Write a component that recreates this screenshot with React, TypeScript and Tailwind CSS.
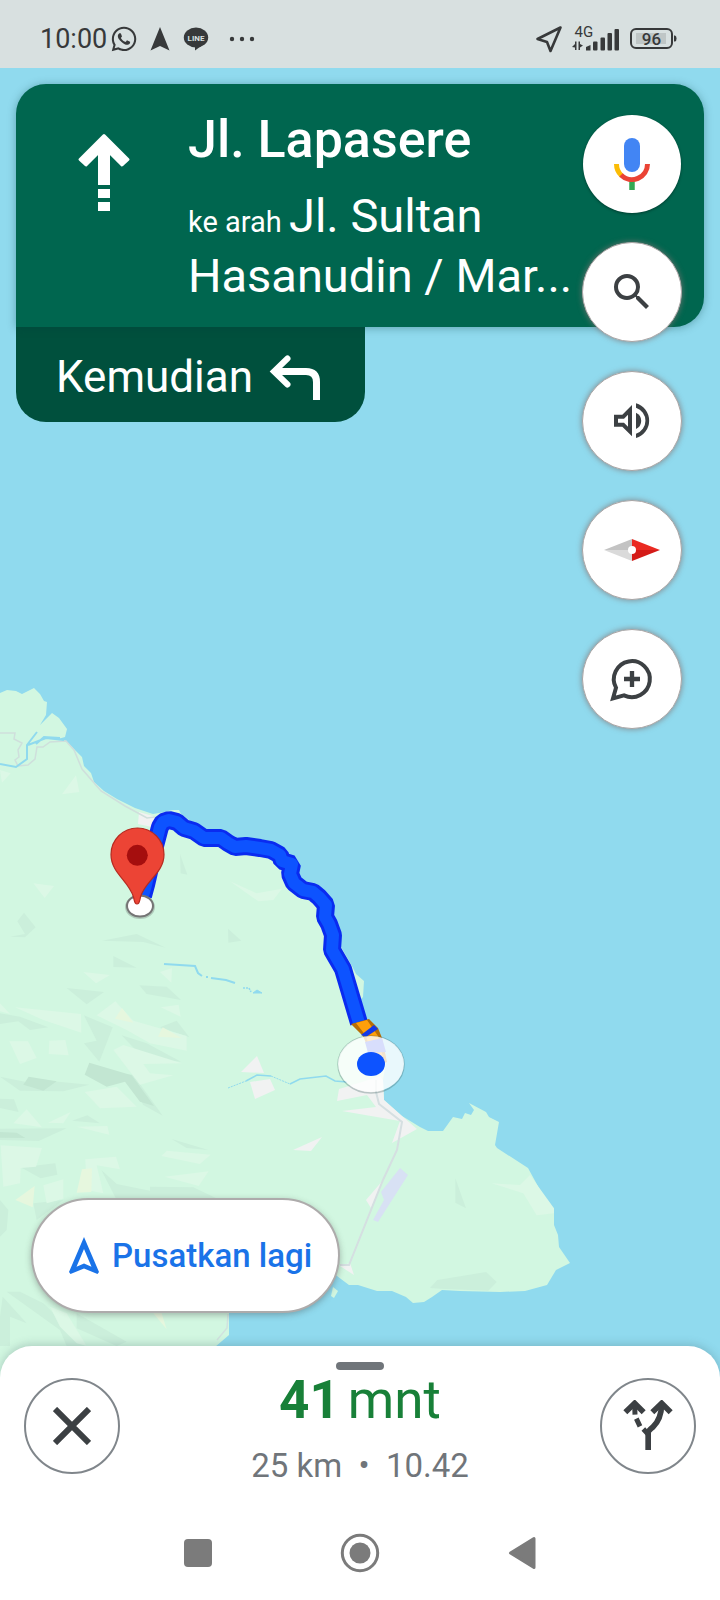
import type { ReactNode } from 'react';
import { MdSearch } from 'react-icons/md';
import { FaWhatsapp } from 'react-icons/fa';

const ROUTE =
  'M143 896 L146 885 L155 846 L160 827 L163 822 L169 820 L177 822 L184 828 L194 831 L204 838 L221 838 L228 843 L235 847 L246 846 L260 848 L271 850 L280 855 L282 861 L292 864 L290 874 L294 883 L303 890 L313 892 L319 897 L326 905 L325 917 L329 924 L333 935 L332 950 L343 969 L359 1023';

const COAST =
  'M0 693 L7 690 L16 691 L22 694 L34 688 L40 694 L44 701 L47 702 L46 715 L40 725 L52 713 L59 718 L67 729 L65 737 L58 739 L66 741 L72 747 L82 757 L84 766 L91 773 L94 782 L104 791 L117 799 L135 808 L153 814 L165 812 L172 810 L179 810 L181 814 L200 828 L222 834 L245 841 L275 846 L292 858 L300 880 L320 895 L332 920 L340 945 L352 966 L356 974 L364 981 L363 997 L361 999 L366 1021 L380 1035 L386 1062 L383 1080 L384 1100 L402 1116 L420 1127 L428 1131 L443 1131 L453 1117 L462 1119 L465 1113 L471 1115 L474 1110 L469 1103 L486 1112 L489 1117 L499 1122 L495 1145 L497 1148 L528 1168 L540 1190 L554 1211 L554 1225 L558 1235 L559 1247 L570 1263 L556 1270 L547 1285 L525 1291 L500 1292 L460 1291 L442 1290 L432 1297 L424 1302 L413 1303 L406 1297 L392 1291 L377 1291 L358 1285 L349 1285 L337 1276 L310 1262 L229 1290 L229 1335 L215 1347 L0 1600 Z';

const DARK_RELIEF = [
  'M306 62 L410 42 L497 83 L430 66 Z',
  'M684 26 L724 62 L685 68 Z',
  'M30 50 L75 42 L52 4 L72 -22 L107 22 L75 52 Z',
  'M340 108 L410 143 L340 141 Z',
  'M200 204 L312 216 L260 253 Z',
  'M418 196 L500 200 L543 240 L440 222 Z',
  'M0 280 L60 290 L145 322 L90 330 L55 304 L0 312 Z',
  'M252 286 L338 322 L298 425 L252 370 L290 362 Z',
  'M480 322 L530 302 L568 352 Z',
  'M365 346 L440 370 L543 425 L430 414 Z',
  'M0 470 L90 488 L160 484 L268 494 L190 514 L60 512 Z',
  'M0 536 L42 538 L56 576 L0 564 Z',
  'M216 602 L262 586 L300 610 Z',
  'M0 626 L200 625 L116 663 L0 660 Z',
  'M380 462 L400 464 L488 587 L430 555 Z',
  'M515 657 L625 690 L560 684 Z',
  'M62 742 L166 730 L172 764 L122 775 Z',
  'M304 750 L350 792 L450 812 L450 800 L580 802 L660 840 L350 840 Z',
  'M0 840 L25 870 L20 930 L0 950 Z',
  'M100 850 L190 840 L110 900 Z',
  'M20 1115 L60 1115 L130 1150 L260 1278 L200 1278 L180 1230 Z',
  'M8 1130 L80 1210 L30 1190 L30 1278 L0 1278 L0 1190 Z',
  'M230 1180 L380 1265 L350 1278 L230 1225 Z',
  'M540 -198 L562 -136 L542 -140 Z',
  'M1366 775 L1398 865 L1366 848 Z',
  'M1290 1104 L1312 1080 L1458 1056 L1490 1086 L1465 1112 L1320 1106 Z',
];

const LIGHT_RELIEF = [
  'M186 -377 L228 -434 L238 -384 Z',
  'M0 -450 L32 -440 L6 -412 Z',
  'M100 -110 L162 -102 L134 -66 Z',
  'M690 -116 L770 -80 L846 -94 L820 -60 L775 -56 Z',
  'M250 156 L330 165 L288 190 Z',
  'M480 156 L516 144 L514 188 Z',
  'M0 250 L30 282 L0 274 Z',
  'M45 262 L243 282 L244 338 L130 300 Z',
  'M290 286 L346 244 L400 302 L560 348 L560 392 L450 370 L380 330 Z',
  'M482 262 L536 254 L542 290 Z',
  'M28 364 L84 364 L110 414 L60 432 Z',
  'M148 362 L196 360 L206 406 L146 402 Z',
  'M340 390 L370 375 L545 430 L430 432 L450 460 L520 466 L420 494 Z',
  'M254 516 L350 500 L410 560 L300 565 Z',
  'M80 568 L126 622 L40 610 Z',
  'M144 608 L212 576 L190 610 Z',
  'M230 620 L322 618 L328 644 Z',
  'M2 676 L126 684 L108 740 L62 744 L60 790 L10 800 Z',
  'M256 718 L348 710 L360 748 L290 736 L310 820 L260 810 Z',
  'M484 708 L500 692 L632 704 L600 732 Z',
  'M494 770 L626 754 L596 798 Z',
  'M130 796 L190 778 L190 836 L140 850 Z',
  'M150 1160 L200 1180 L260 1278 L230 1270 L180 1220 Z',
  'M1475 790 L1560 795 L1590 765 L1662 865 L1662 880 L1610 886 L1570 820 Z',
];

function MapCanvas() {
  return (
    <svg
      className="absolute inset-0 h-full w-full"
      viewBox="0 0 720 1600"
      preserveAspectRatio="xMidYMid slice"
      role="img"
      aria-label="Peta rute"
    >
      <rect width="720" height="1600" fill="#90daee" />
      <path d={COAST} fill="#d2f7e1" />
      <path d="M333 1287 L338 1291 L334 1298 L331 1296 Z" fill="#d2f7e1" />

      <g transform="translate(0 920) scale(.33333)">
        <g fill="#cbefdb">
          {DARK_RELIEF.map((d) => (
            <path key={d} d={d} />
          ))}
        </g>
        <g fill="#dcf8e6">
          {LIGHT_RELIEF.map((d) => (
            <path key={d} d={d} />
          ))}
        </g>
        <g fill="#c2e6d2">
          <path d="M268 428 L395 466 L462 558 L420 545 L375 485 L320 500 L254 464 Z" />
          <path d="M86 470 L170 484 L130 512 L70 494 Z" />
          <path d="M0 636 L50 638 L76 654 L0 653 Z" />
        </g>
        <g fill="#e6f7de">
          <path d="M345 296 L366 264 L400 308 Z" />
          <path d="M474 350 L488 322 L545 354 Z" />
          <path d="M246 748 L276 745 L274 816 L230 818 Z" />
          <path d="M46 840 L104 798 L98 862 Z" />
          <path d="M460 1180 L485 1180 L500 1228 Z" />
        </g>
      </g>

      <g fill="#f1f2f2">
        <path d="M139 812 L153 816 L158 823 L152 827 L138 824 Z" />
        <path d="M241 1072 L257 1056 L264 1073 Z" />
        <path d="M250 1082 L270 1079 L275 1090 L255 1099 Z" />
        <path d="M339 1089 L362 1082 L380 1076 L383 1080 L384 1100 L402 1116 L417 1129 L392 1143 L400 1121 L342 1111 L376 1107 L367 1095 L337 1101 Z" />
        <path d="M293 1150 L322 1137 L311 1151 Z" />
        <path d="M384 1179 L366 1200 L371 1208 Z" />
        <path d="M340 1266 L350 1263 L354 1275 Z" />
      </g>
      <path d="M400 1168 L408 1175 L378 1222 L373 1220 L384 1200 L381 1192 Z" fill="#d8e1f4" />

      <path
        d="M0 733 L15 733 L14 739 L22 743 L18 750 L19 757 L15 760 L18 766 L28 765 L35 759 L37 747 L43 747 L50 742 L66 741 L74 750 L82 769 L101 791 L125 806 L147 818 L155 817"
        fill="none"
        stroke="#cfdfdc"
        strokeWidth="1.500"
      />
      <path d="M376 1080 L376 1092 L379 1104 L402 1122 L397 1150 L383 1180 L349 1265 L340 1265" fill="none" stroke="#d5dfe1" strokeWidth="2" />
      <path d="M228 1314 L227 1328 L217 1340" fill="none" stroke="#d1e2df" strokeWidth="1.500" />
      <g fill="none" stroke="#90daee" strokeWidth="1.600">
        <path d="M0 764 L16 767 L27 759 L27 745 L37 732 M28 745 L46 738 L64 740 M36 744 L44 737 L60 738" strokeWidth="2" />
        <path d="M164 964 L195 966 L198 973 L202 976" strokeWidth="2" />
        <path d="M206 977 L208 977 M211 978 L226 980 L235 983" strokeWidth="2" />
        <path d="M243 988 H249 L251 992" strokeDasharray="2 1" />
        <path d="M253 993 L257 990 L262 993 Z" fill="#90daee" strokeWidth="1" />
        <path d="M228 1088 L246 1081" strokeWidth="1" strokeDasharray="2 1" />
        <path d="M246 1081 L257 1075 L271 1076 M290 1084 L300 1079 L326 1076 L335 1081 L347 1082" strokeWidth="1.500" />
        <path d="M271 1076 L290 1084" strokeWidth="1" strokeDasharray="2 1" />
      </g>

      <path d={ROUTE} fill="none" stroke="#0a2bf0" strokeWidth="18" strokeLinejoin="bevel" />
      <path d={ROUTE} fill="none" stroke="#0d53ff" strokeWidth="12" strokeLinejoin="round" />

      <path d="M351 1024 L369 1019 L378 1028 L382 1038 L387 1062 L382 1064 L368 1048 L363 1036 Z" fill="#b86e05" />
      <path d="M356 1023 L367 1020 L378 1036 L384 1062 L370 1050 L366 1036 Z" fill="#ff9f0a" />
      <path d="M361 1035 L374 1025 L378 1029 L366 1037 Z" fill="#1238e8" />
      <path d="M365 1042 L382 1038 L386 1052 L368 1053 Z" fill="#3f5bf0" />

      <ellipse cx="371" cy="1064.500" rx="33" ry="28.500" fill="none" stroke="#35585a" strokeWidth="1.500" opacity=".3" />
      <ellipse cx="371" cy="1064" rx="33" ry="28" fill="#ffffff" opacity=".8" />
      <ellipse cx="371" cy="1064" rx="14" ry="12" fill="#0d53ff" />

      <ellipse cx="140" cy="907" rx="15" ry="12" fill="#6f7773" opacity=".35" />
      <ellipse cx="140" cy="906" rx="13" ry="10.500" fill="#fff" stroke="#757575" strokeWidth="2" />
      <path
        d="M137 904 C134.500 904 134.500 901 133.500 897 C129 881 111 873 111 854.500 A26.500 26.500 0 0 1 164 854.500 C164 873 145 881 140.500 897 C139.500 901 139.500 904 137 904 Z"
        fill="#ec4435"
        stroke="#b72a20"
        strokeWidth="1.200"
      />
      <circle cx="137.300" cy="855.300" r="10.500" fill="#a50e0e" />
    </svg>
  );
}

function StatusBar() {
  return (
    <header className="relative flex h-[68px] shrink-0 items-center justify-between bg-[#d8e0e0] pt-[10px] pr-[43px] pl-10 text-[#37393a]">
      <div className="flex items-center">
        <span className="font-['Roboto',sans-serif] text-[27px] leading-8">10:00</span>
        <FaWhatsapp className="ml-[3px] size-[28px]" aria-label="WhatsApp" />
        <svg className="ml-3 h-6 w-5" viewBox="0 0 20 24" fill="currentColor" aria-hidden="true">
          <path d="M10 0 L19.500 23.500 L10 19 L.5 23.500 Z" />
        </svg>
        <svg className="ml-3 h-6 w-7" viewBox="0 0 28 24" aria-hidden="true">
          <ellipse cx="14" cy="10.500" rx="12.200" ry="10" fill="currentColor" />
          <path d="M13 19 V23.500 L22 17 Z" fill="currentColor" />
          <text x="14" y="13.500" textAnchor="middle" fontSize="8" fontWeight="700" fontFamily="Roboto, sans-serif" fill="#d8e0e0">
            LINE
          </text>
        </svg>
        <svg className="ml-[18px] h-6 w-7" viewBox="0 0 28 24" fill="currentColor" aria-hidden="true">
          <circle cx="4" cy="12" r="2.200" />
          <circle cx="14" cy="12" r="2.200" />
          <circle cx="24" cy="12" r="2.200" />
        </svg>
      </div>
      <div className="flex items-center">
        <svg className="h-7 w-7" viewBox="0 0 28 28" fill="none" stroke="currentColor" strokeWidth="2.600" strokeLinejoin="round" aria-hidden="true">
          <path d="M25.500 2.500 L2.500 14 L12 17 L15.500 26 Z" />
        </svg>
        <svg className="ml-2 h-[32px] w-[50px]" viewBox="0 -3 50 32" fill="currentColor" aria-hidden="true">
          <text x="3.500" y="11" fontSize="15" fontFamily="Roboto, sans-serif">
            4G
          </text>
          <path d="M1 21 L4 18 V15.500 H5.500 V24 H4 V21.500 Z M7.500 15.500 H9 V18 L12 19.500 L9 21.500 V24 H7.500 Z" />
          <path d="M15 24.500 V21 L19.500 19 V24.500 Z" />
          <rect x="22" y="15.500" width="4.500" height="9" rx="1" />
          <rect x="29.500" y="11.500" width="4.500" height="13" rx="1" />
          <rect x="36.500" y="7" width="4.500" height="17.500" rx="1" />
          <rect x="43.500" y="3" width="4.500" height="21.500" rx="1" />
        </svg>
        <svg className="ml-2 h-6 w-[48px]" viewBox="0 0 48 24" aria-hidden="true">
          <rect x="2" y="2" width="41" height="19" rx="5" fill="none" stroke="currentColor" strokeWidth="2" />
          <rect x="7" y="6" width="30" height="11" fill="#bfc6c6" />
          <path d="M45 8.500 H46 Q47.500 9 47.500 11.500 Q47.500 14 46 14.500 H45 Z" fill="currentColor" />
          <text x="22.500" y="17.500" textAnchor="middle" fontSize="17" fontWeight="500" fontFamily="Roboto, sans-serif" fill="currentColor">
            96
          </text>
        </svg>
      </div>
    </header>
  );
}

function DirectionCard() {
  return (
    <section className="mx-4 mt-4">
      <div className="relative flex min-h-[243px] rounded-[30px] rounded-bl-none bg-[#00664f] pb-4 text-white shadow-[0_1px_8px_rgba(0,60,60,0.35)]">
        <div className="flex w-[172px] shrink-0 justify-center pt-12 pl-1">
          <svg className="h-[80px] w-[56px]" viewBox="0 0 56 80" aria-hidden="true">
            <path
              d="M28 3.500 L52 27.500 L46 33 L32.500 19.500 V19 H23.500 V19.500 L10 33 L4 27.500 Z"
              fill="#fff"
              stroke="#fff"
              strokeWidth="3"
              strokeLinejoin="round"
            />
            <path d="M22 14 H34 V53 H22 Z M22 57 H34 V66 H22 Z M22 70 H34 V79 H22 Z" fill="#fff" />
          </svg>
        </div>
        <div className="min-w-0 flex-1 pt-[26px] pr-[112px] font-['Roboto',sans-serif]">
          <h1 className="text-[52px] leading-[60px] font-medium">Jl. Lapasere</h1>
          <p className="mt-4 text-[47px] leading-[60px]">
            <span className="text-[29px] leading-[30px]">ke arah </span>
            <span>Jl. Sultan </span>
            <span>Hasanudin / Mar...</span>
          </p>
        </div>
      </div>
      <div className="flex h-[95px] w-[349px] items-center rounded-b-[30px] bg-[#00503d] pt-1 pl-10 text-white">
        <span className="font-['Roboto',sans-serif] text-[44px] leading-[52px]">Kemudian</span>
        <svg className="ml-4 h-[48px] w-[54px]" viewBox="0 -1 54 48" fill="none" stroke="#fff" strokeWidth="6" aria-hidden="true">
          <path d="M18.500 4.500 L5 17.500 L18.500 30.500" strokeLinecap="round" />
          <path d="M6 17.500 H37 Q47.500 17.500 47.500 28 V46" strokeWidth="7" />
        </svg>
      </div>
    </section>
  );
}

function RoundButton({ label, children }: { label: string; children: ReactNode }) {
  return (
    <button
      type="button"
      aria-label={label}
      className="flex size-[100px] items-center justify-center rounded-full border border-[#a9a5a5] bg-white text-[#3c4043] shadow-[0_0_5px_1px_rgba(130,115,115,0.6)]"
    >
      {children}
    </button>
  );
}

function MapControls() {
  return (
    <div className="absolute top-[47px] right-[38px] flex flex-col items-center gap-[29px]">
      <button
        type="button"
        aria-label="Suara"
        className="flex size-[98px] items-center justify-center rounded-full bg-white shadow-[0_1px_3px_rgba(0,0,0,0.4)]"
      >
        <svg className="h-[54px] w-[38px]" viewBox="0 0 38 54" fill="none" aria-hidden="true">
          <rect x="11" y="1" width="16" height="34" rx="8" fill="#4285f4" />
          <path d="M19 44 V53" stroke="#34a853" strokeWidth="5.500" />
          <path d="M3.500 27 A15.500 15.500 0 0 0 8.500 38.500" stroke="#fbbc05" strokeWidth="5" />
          <path d="M8 38 A15.500 15.500 0 0 0 34.500 27" stroke="#ea4335" strokeWidth="5" />
        </svg>
      </button>
      <RoundButton label="Telusuri">
        <MdSearch className="size-[48px]" aria-hidden="true" />
      </RoundButton>
      <RoundButton label="Volume">
        <svg className="size-[48px]" viewBox="204 532 144 144" fill="currentColor" aria-hidden="true">
          <path fillRule="evenodd" d="M222 585 H247 L276 556 V650 L247 621 H222 Z M234 597 H252 L264 585 V621 L252 609 H234 Z" />
          <path d="M288 579 A27 27 0 0 1 288 628 Z" />
          <path d="M288 551 A54 54 0 0 1 288 655 V642 A41 41 0 0 0 288 564 Z" />
        </svg>
      </RoundButton>
      <RoundButton label="Kompas">
        <svg className="h-[22px] w-[56px]" viewBox="0 0 168 66" aria-hidden="true">
          <path d="M84 0 L0 33 H84 Z" fill="#c3c3c3" />
          <path d="M84 66 L0 33 H84 Z" fill="#dadada" />
          <path d="M84 0 L168 33 H84 Z" fill="#ea2a22" />
          <path d="M84 66 L168 33 H84 Z" fill="#d41b18" />
          <circle cx="84" cy="33" r="12" fill="#fff" />
        </svg>
      </RoundButton>
      <RoundButton label="Tambah laporan">
        <svg className="size-[48px]" viewBox="204 1302 144 144" fill="none" stroke="currentColor" strokeWidth="12" aria-hidden="true">
          <path d="M228 1400 A54 54 0 1 1 252 1423 L219 1432 Z" />
          <path d="M276 1350 V1398 M252 1374 H300" strokeWidth="13" />
        </svg>
      </RoundButton>
    </div>
  );
}

function TripSheet() {
  return (
    <footer className="relative shrink-0 rounded-t-[32px] bg-white pt-4 font-['Roboto',sans-serif] shadow-[0_-2px_8px_rgba(60,90,100,0.25)]">
      <div className="mx-auto h-2 w-12 rounded-full bg-[#70757a]" />
      <div className="mt-2 flex min-h-[128px] items-start justify-between px-6">
        <button
          type="button"
          aria-label="Tutup"
          className="flex size-[96px] items-center justify-center rounded-full border-2 border-[#80868b] text-[#3c4043]"
        >
          <svg className="size-[38px]" viewBox="0 0 38 38" stroke="currentColor" strokeWidth="6" aria-hidden="true">
            <path d="M2 2 L36 36 M36 2 L2 36" />
          </svg>
        </button>
        <div className="text-center">
          <p className="flex items-baseline justify-center gap-2 text-[53px] leading-[44px] text-[#188038]">
            <strong className="font-bold">41</strong> <span>mnt</span>
          </p>
          <p className="mt-6 text-[33px] leading-[40px] text-[#70757a]">25 km&nbsp; •&nbsp; 10.42</p>
        </div>
        <button
          type="button"
          aria-label="Rute alternatif"
          className="flex size-[96px] items-center justify-center rounded-full border-2 border-[#80868b] text-[#3c4043]"
        >
          <svg className="h-[52px] w-[50px]" viewBox="789 210 150 156" fill="none" stroke="currentColor" strokeWidth="17" aria-hidden="true">
            <path d="M864.500 360 V308 Q864 303 878 292 Q904 268 905 222" />
            <path d="M877 247 L905 220 L932 247 M796 247 L824 220 L851 247" />
            <path d="M824 222 L825 254 M829 266 L840 289 M850 297 L866 314" strokeWidth="15" />
          </svg>
        </button>
      </div>
      <nav className="mx-auto grid h-[94px] max-w-[486px] grid-cols-3 place-items-center text-[#7b7b7b]" aria-label="Sistem">
        <button type="button" aria-label="Aplikasi terbaru" className="size-7 rounded-[4px] bg-[#7b7b7b]" />
        <button type="button" aria-label="Beranda">
          <svg className="size-[40px]" viewBox="0 0 40 40" aria-hidden="true">
            <circle cx="20" cy="20" r="17.700" fill="none" stroke="currentColor" strokeWidth="3" />
            <circle cx="20" cy="20" r="10.500" fill="currentColor" />
          </svg>
        </button>
        <button type="button" aria-label="Kembali">
          <svg className="h-[34px] w-[28px]" viewBox="0 0 28 34" fill="currentColor" stroke="currentColor" strokeWidth="3" strokeLinejoin="round" aria-hidden="true">
            <path d="M2.500 17 L26 2.500 V31.500 Z" />
          </svg>
        </button>
      </nav>
    </footer>
  );
}

export default function App() {
  return (
    <div className="relative isolate flex min-h-screen flex-col overflow-hidden">
      <MapCanvas />
      <StatusBar />
      <main className="relative flex flex-1 flex-col justify-between">
        <DirectionCard />
        <MapControls />
        <button
          type="button"
          className="mb-[33px] ml-[31px] flex h-[115px] w-[309px] items-center gap-3 self-start rounded-full border-2 border-[#adabab] bg-white pl-[35px] font-['Roboto',sans-serif] text-[33px] leading-[40px] font-medium text-[#1a73e8] shadow-[0_2px_6px_rgba(60,60,60,0.35)]"
        >
          <svg className="h-[38px] w-[32px] shrink-0" viewBox="0 0 32 38" fill="currentColor" aria-hidden="true">
            <path fillRule="evenodd" d="M16 0 L31 35 L29.500 37 L16 31.500 L2.500 37 L1 35 Z M16 12 L23.500 29.800 L16 26.500 L8.500 29.800 Z" />
          </svg>
          <span>Pusatkan lagi</span>
        </button>
      </main>
      <TripSheet />
    </div>
  );
}
